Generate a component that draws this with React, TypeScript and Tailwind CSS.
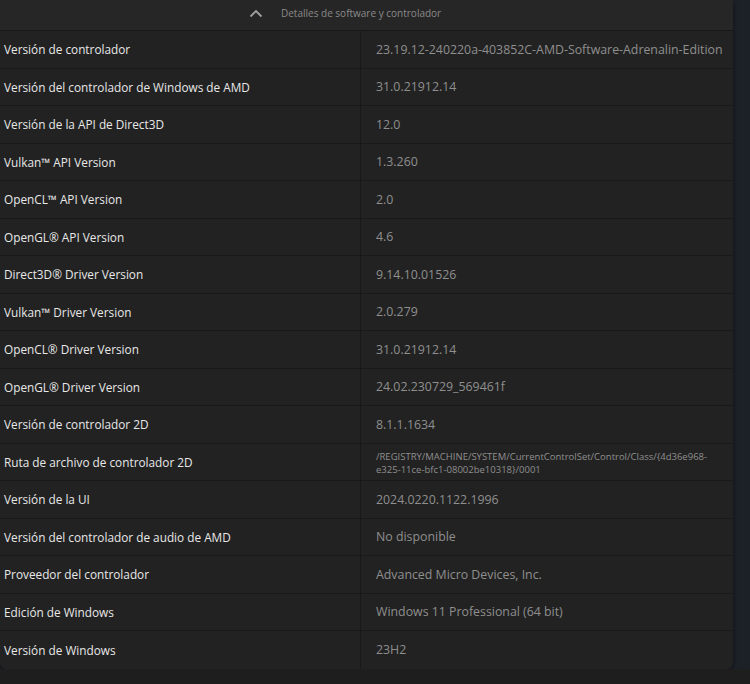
import React from "react";

const rows: [string, string][] = [
  ["Versión de controlador", "23.19.12-240220a-403852C-AMD-Software-Adrenalin-Edition"],
  ["Versión del controlador de Windows de AMD", "31.0.21912.14"],
  ["Versión de la API de Direct3D", "12.0"],
  ["Vulkan™ API Version", "1.3.260"],
  ["OpenCL™ API Version", "2.0"],
  ["OpenGL® API Version", "4.6"],
  ["Direct3D® Driver Version", "9.14.10.01526"],
  ["Vulkan™ Driver Version", "2.0.279"],
  ["OpenCL® Driver Version", "31.0.21912.14"],
  ["OpenGL® Driver Version", "24.02.230729_569461f"],
  ["Versión de controlador 2D", "8.1.1.1634"],
  ["Ruta de archivo de controlador 2D", "PATH"],
  ["Versión de la UI", "2024.0220.1122.1996"],
  ["Versión del controlador de audio de AMD", "No disponible"],
  ["Proveedor del controlador", "Advanced Micro Devices, Inc."],
  ["Edición de Windows", "Windows 11 Professional (64 bit)"],
  ["Versión de Windows", "23H2"],
];

export default function App() {
  return (
    <div
      className="w-[750px] h-[684px] overflow-hidden bg-[#1c2127] flex flex-col"
      style={{ fontFamily: '"Open Sans", "Noto Sans", sans-serif' }}
    >
      <div className="w-[733px] bg-[#222222] rounded-b-[6px] shadow-[0_2px_4px_rgba(0,0,0,0.5)] flex flex-col">
        <div className="h-[31px] pb-[4px] bg-[#262626] border-b border-[#181818] flex items-center gap-[18px] pl-[249px]">
          <svg width="14" height="9" viewBox="0 0 14 9">
            <path d="M1.5 7.5 L7 2 L12.5 7.5" stroke="#a0a0a0" strokeWidth="1.8" fill="none" />
          </svg>
          <span className="text-[10px] text-[#8a8a8a]">Detalles de software y controlador</span>
        </div>
        {rows.map(([k, v], i) => (
          <div
            key={i}
            className={`flex h-[37.5px] ${i < rows.length - 1 ? "border-b border-[#191919]" : ""}`}
          >
            <div className="w-[361px] border-r border-[#191919] flex items-center pl-[4px] pt-[2px] text-[11.8px] text-[#e8e8e8]">
              {k}
            </div>
            <div className="flex-1 flex items-center pl-[15px] pt-[2px] text-[12.35px] text-[#8f8f8f]">
              {v === "PATH" ? (
                <div className="text-[9.5px] leading-[13px] text-[#8f8f8f]">
                  /REGISTRY/MACHINE/SYSTEM/CurrentControlSet/Control/Class/{"{"}4d36e968-
                  <br />
                  e325-11ce-bfc1-08002be10318{"}"}/0001
                </div>
              ) : (
                v
              )}
            </div>
          </div>
        ))}
      </div>
      <div className="flex-1 bg-[#1e1e1e]" />
    </div>
  );
}
